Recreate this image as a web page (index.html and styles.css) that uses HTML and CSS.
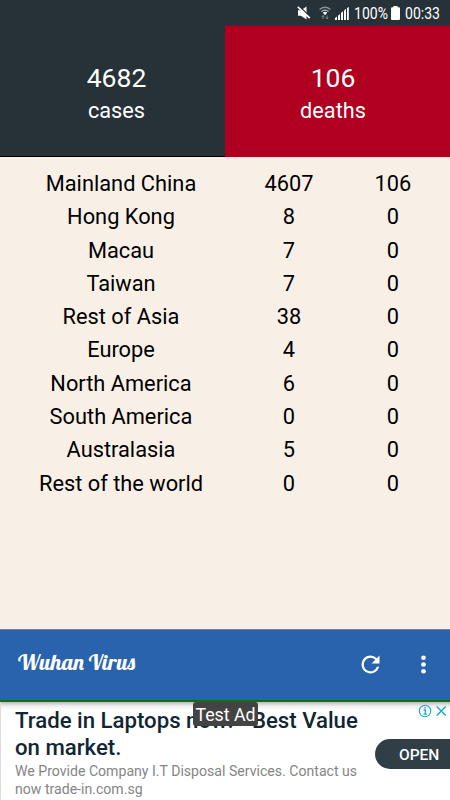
FILE: index.html
```html
<!DOCTYPE html>
<html lang="en">
<head>
<meta charset="utf-8">
<title>Wuhan Virus</title>
<link rel="stylesheet" href="styles.css">
</head>
<body>
<div class="screen">
  <header class="status">
    <svg class="mute" width="14" height="14" viewBox="0 0 14 14"><path d="M1 4.300h3L9.500.5v13L4 9.700H1z" fill="#fff"/><path d="M2.200.3l11 10.500" stroke="#263238" stroke-width="1.300"/><path d="M.8.8l12 11.400" stroke="#fff" stroke-width="1.700"/></svg>
    <svg class="wifi" width="12" height="14" viewBox="0 0 12 14" fill="none"><path d="M.6 3.4Q6-.9 11.4 3.4" stroke="#8b9396" stroke-width="1.3"/><path d="M2.4 5.5Q6 2.7 9.6 5.5" stroke="#b2b8ba" stroke-width="1.3"/><path d="M3.8 6.6Q6 5 8.2 6.6L6 9.2z" fill="#fff"/><path d="M4 13V9.5M2.7 10.9L4 9.5l1.3 1.4M8 9.5V13M6.7 11.6L8 13l1.3-1.4" stroke="#7e878a"/></svg>
    <svg class="signal" width="14" height="13" viewBox="0 0 14 13" fill="#fff"><path d="M0 13v-2l2-1.500V13zM3 13V8.700l2-1.600V13zM6 13V6l2-1.800V13zM9 13V3.500l2-1.700V13zM12 13V1l1.800-1v13z"/></svg>
    <span class="percent">100%</span>
    <svg class="battery" width="9" height="14" viewBox="0 0 9 14"><path d="M2.5 0h4v1.3H8q1 0 1 1V13q0 1-1 1H1q-1 0-1-1V2.300q0-1 1-1h1.500z" fill="#fff"/></svg>
    <span class="clock">00:33</span>
  </header>
  <section class="totals">
    <div class="total cases"><strong>4682</strong><span>cases</span></div>
    <div class="total deaths"><strong>106</strong><span>deaths</span></div>
  </section>
  <main class="regions">
    <div class="row"><span>Mainland China</span><span>4607</span><span>106</span></div>
    <div class="row"><span>Hong Kong</span><span>8</span><span>0</span></div>
    <div class="row"><span>Macau</span><span>7</span><span>0</span></div>
    <div class="row"><span>Taiwan</span><span>7</span><span>0</span></div>
    <div class="row"><span>Rest of Asia</span><span>38</span><span>0</span></div>
    <div class="row"><span>Europe</span><span>4</span><span>0</span></div>
    <div class="row"><span>North America</span><span>6</span><span>0</span></div>
    <div class="row"><span>South America</span><span>0</span><span>0</span></div>
    <div class="row"><span>Australasia</span><span>5</span><span>0</span></div>
    <div class="row"><span>Rest of the world</span><span>0</span><span>0</span></div>
  </main>
  <nav class="bar">
    <h1>Wuhan Virus</h1>
    <svg class="refresh" width="27" height="27" viewBox="0 0 24 24" fill="#fff"><path d="M17.650 6.350A7.960 7.960 0 0 0 12 4a8 8 0 1 0 7.730 10h-2.080A6 6 0 1 1 12 6c1.660 0 3.140.690 4.220 1.780L13 11h7V4z"/></svg>
    <svg class="more" width="27" height="27" viewBox="0 0 24 24" fill="#fff"><circle cx="12" cy="6" r="2.100"/><circle cx="12" cy="12" r="2.100"/><circle cx="12" cy="18" r="2.100"/></svg>
  </nav>
  <aside class="ad">
    <div class="copy">
      <h2>Trade in Laptops now! - Best Value<br>on market.</h2>
      <p>We Provide Company I.T Disposal Services. Contact us<br>now trade-in.com.sg</p>
    </div>
    <span class="open">OPEN</span>
    <span class="badge">Test Ad</span>
    <svg class="choices" width="30" height="14" viewBox="0 0 30 14" fill="none" stroke="#16a9cd"><circle cx="7" cy="7" r="5.700" stroke-width="1.100"/><path d="M5.600 6h1.800v4M5.500 10.200h3.200" stroke-width="1.300"/><path d="M6.300 3.800h1.400" stroke-width="1.400"/><path d="M18.700 2.500l9 9m0-9l-9 9" stroke-width="1.400"/></svg>
  </aside>
</div>
</body>
</html>
```
FILE: styles.css
```css
* { box-sizing: border-box; }
body { margin: 0; font-family: Roboto, sans-serif; }
.screen { width: 450px; height: 800px; display: flex; flex-direction: column; overflow: hidden; background: #f8f0e7; }
.status { height: 26px; flex: none; display: flex; align-items: center; justify-content: flex-end; padding-right: 10px; background: #263238; color: #fff; font-size: 16.5px; line-height: 30px; white-space: nowrap; }
.mute { margin-right: 8px; }
.wifi { margin-right: 4px; }
.signal { margin-right: 5px; }
.percent { width: 33px; margin-right: 4px; transform: translateY(1px) scaleX(.85); transform-origin: left; }
.battery { margin-right: 5px; }
.clock { width: 35px; transform: translateY(1px) scaleX(.85); transform-origin: left; }
.totals { height: 131px; flex: none; display: grid; grid-template-columns: 1fr 1fr; }
.total { display: flex; flex-direction: column; align-items: center; padding-top: 36px; color: #fff; }
.cases { background: #263238; padding-left: 8px; border-bottom: 1px solid #000; }
.deaths { background: #b00020; padding-right: 9px; }
.total strong { font-size: 26.5px; line-height: 32px; font-weight: 400; }
.total span { font-size: 21.7px; line-height: 34px; }
.regions { flex: 1; padding-top: 10px; color: #000; font-size: 21.8px; }
.row { display: grid; grid-template-columns: 242px 94px 114px; height: 33.300px; line-height: 33.300px; text-align: center; white-space: nowrap; }
.bar { height: 73px; flex: none; display: flex; align-items: center; background: #2a63ad; border-top: 1px solid #778092; border-bottom: 2px solid #0a7117; padding: 0 0 2px 18px; }
.bar h1 { width: 339px; margin: 0; color: #fff; font-family: Lobster, "Liberation Serif", serif; font-size: 22.3px; line-height: 30px; font-weight: 400; white-space: nowrap; transform: translateY(-2px); }
.more { margin-left: 26px; }
.ad { position: relative; height: 98px; flex: none; display: flex; background: linear-gradient(#bbb, #eee 4px, #fff 8px); border-left: 1px solid #ddd; }
.copy { width: 374px; flex: none; padding: 5px 0 0 14px; white-space: nowrap; }
.ad h2 { margin: 0; color: #102733; font-size: 22.2px; line-height: 27px; font-weight: 500; }
.ad p { margin: 1px 0 0; color: #858585; font-size: 14.1px; line-height: 18px; }
.open { width: 90px; height: 30px; flex: none; margin-top: 37px; padding-left: 24px; border-radius: 15px; background: #303f46; color: #fff; font-size: 15.5px; font-weight: 500; line-height: 32px; }
.badge { position: absolute; left: 192px; top: 0; width: 65px; height: 24px; border-radius: 3px; background: #434343; color: #fff; font-size: 17.8px; line-height: 25px; text-align: center; white-space: nowrap; }
.choices { position: absolute; left: 417px; top: 2px; }
```
